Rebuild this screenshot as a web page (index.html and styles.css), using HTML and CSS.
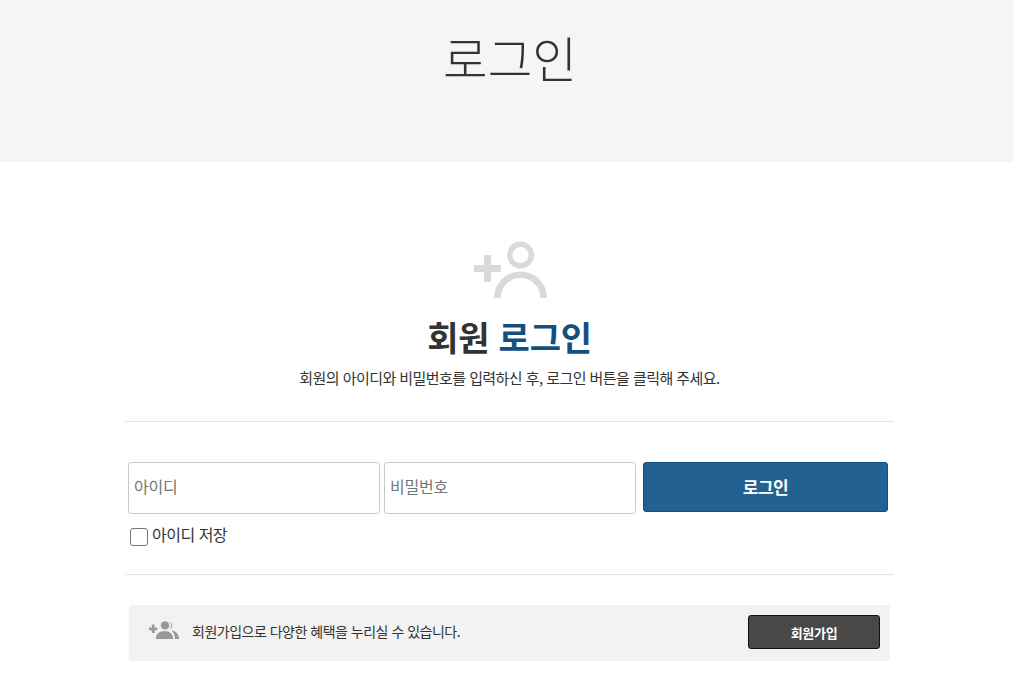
FILE: index.html
```html
<!DOCTYPE html>
<html lang="ko">
<head>
<meta charset="utf-8">
<title>로그인</title>
<link rel="stylesheet" href="styles.css">
</head>
<body>
<header class="banner"><h1 class="banner-title">로그인</h1></header>
<main class="wrap">
  <section class="intro">
    <svg class="intro-icon" width="74" height="58" viewBox="0 0 74 58" aria-hidden="true">
      <path d="M0 24h27v7H0z M10 14h7v27h-7z" fill="#d9d9d9"/>
      <circle cx="46.500" cy="14" r="10.800" fill="none" stroke="#d9d9d9" stroke-width="5.400"/>
      <path d="M23.300 57a23.200 23.200 0 0 1 46.400 0" fill="none" stroke="#d9d9d9" stroke-width="6.600"/>
    </svg>
    <h2 class="intro-title">회원 <span class="accent">로그인</span></h2>
    <p class="intro-text">회원의 아이디와 비밀번호를 입력하신 후, 로그인 버튼을 클릭해 주세요.</p>
  </section>
  <form class="login">
    <div class="login-row">
      <input class="field" type="text" placeholder="아이디">
      <input class="field" type="password" placeholder="비밀번호">
      <button class="login-btn" type="button">로그인</button>
    </div>
    <label class="save"><span class="box"></span>아이디 저장</label>
  </form>
  <section class="join">
    <svg class="join-icon" width="31" height="18" viewBox="0 0 31 18" aria-hidden="true">
      <path d="M1 6.400h8.400v2.800H1z M3.800 3.600h2.800v8.400H3.800z" fill="#999"/>
      <circle cx="17" cy="4.400" r="4.200" fill="#999"/>
      <path d="M21.600 0.400a4.200 4.200 0 0 1 0 7.800a6 6 0 0 0 0-7.800z" fill="#999"/>
      <path d="M7.800 18c0-5.200 3.900-8 8.700-8s8.700 2.800 8.700 8z" fill="#999"/>
      <path d="M23.500 9.400c4.300 0.500 7.500 3.400 7.500 8.600h-4c0-3.600-1.200-6.500-3.500-8.600z" fill="#999"/>
    </svg>
    <p class="join-text">회원가입으로 다양한 혜택을 누리실 수 있습니다.</p>
    <button class="join-btn" type="button">회원가입</button>
  </section>
</main>
</body>
</html>
```
FILE: styles.css
```css
* { box-sizing: border-box; }
html, body { margin: 0; padding: 0; }
body {
  background: #fff;
  color: #333;
  font-family: "Noto Sans CJK KR", "Noto Sans", sans-serif;
  height: 686px;
  overflow: hidden;
}
.banner {
  height: 162px;
  background: #f5f5f5;
  padding: 23px 0 0 7px;
  text-align: center;
}
.banner-title {
  margin: 0;
  font-size: 48.500px;
  font-weight: 300;
  line-height: 68px;
  color: #333;
}
.wrap {
  width: 769px;
  margin-left: 125px;
}
.intro {
  display: flex;
  flex-direction: column;
  align-items: center;
  padding-top: 79px;
  height: 260px;
  border-bottom: 1px solid #e3e3e3;
}
.intro-icon { display: block; margin-left: 2px; }
.intro-title {
  margin: 13px 0 0;
  font-size: 34px;
  font-weight: 700;
  line-height: 50px;
  letter-spacing: -0.2px;
  color: #333;
}
.accent { color: #134f7f; }
.intro-text {
  margin: 5px 0 0;
  font-size: 15px;
  line-height: 22px;
  color: #333;
  letter-spacing: -0.56px;
}
.login {
  height: 153px;
  padding: 40px 0 0 3px;
  border-bottom: 1px solid #e3e3e3;
}
.login-row {
  display: flex;
  align-items: flex-start;
  gap: 4px;
}
.field {
  width: 252px;
  height: 52px;
  padding: 0 5px 5px;
  border: 1px solid #c8c8c8;
  border-radius: 3px;
  background: #fff;
  font: 400 16px "Noto Sans CJK KR", sans-serif;
  letter-spacing: -0.2px;
  color: #333;
}
.field::placeholder { color: #757575; opacity: 1; }
.login-btn {
  width: 245px;
  height: 50px;
  margin-left: 3px;
  padding: 0 0 2px;
  border: 1px solid #134f7f;
  border-radius: 3px;
  background: #236192;
  color: #fff;
  font: 700 17px "Noto Sans CJK KR", sans-serif;
  letter-spacing: -0.5px;
}
.save {
  display: flex;
  align-items: flex-start;
  gap: 4px;
  margin: 9px 0 0 2px;
  font-size: 16px;
  line-height: 22px;
  letter-spacing: -0.5px;
  color: #333;
}
.box {
  width: 18px;
  height: 18px;
  margin-top: 5px;
  border: 1px solid #767676;
  border-radius: 3px;
  background: #fff;
}
.join {
  display: flex;
  align-items: center;
  width: 761px;
  height: 56px;
  margin: 30px 0 0 4px;
  padding: 0 10px 0 19px;
  background: #f2f2f2;
  border-radius: 3px;
}
.join-icon { flex: none; margin-bottom: 6px; }
.join-text {
  flex: 1;
  margin: 0 0 4px 13px;
  font-size: 14px;
  letter-spacing: -0.5px;
  color: #333;
}
.join-btn {
  width: 132px;
  height: 34px;
  margin-bottom: 2px;
  border: 1px solid #111;
  border-radius: 3px;
  background: #484848;
  color: #fff;
  font: 700 13px "Noto Sans CJK KR", sans-serif;
  letter-spacing: -0.3px;
}
```
